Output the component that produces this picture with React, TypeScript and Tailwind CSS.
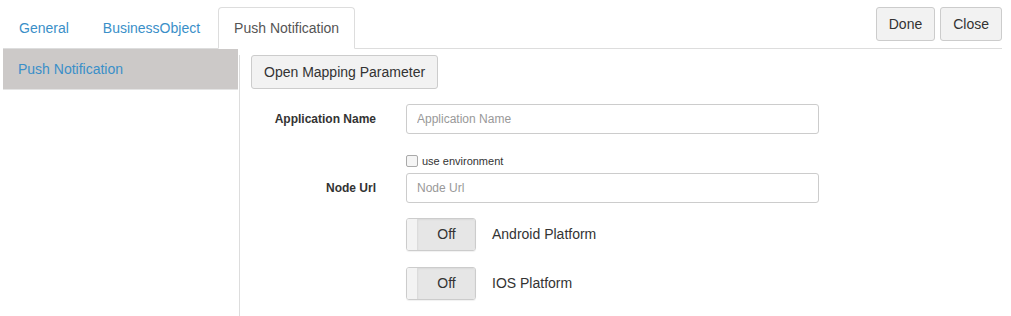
import type { FC } from 'react';

const Toggle: FC<{ label: string }> = ({ label }) => (
  <div className="flex items-center">
    <div className="flex h-[33px] w-[70px] overflow-hidden rounded-[3px] border border-[#ccc] shadow-[0_1px_1px_rgba(0,0,0,0.06)]">
      <div className="w-[11px] bg-[#f3f3f3] border-r border-[#dcdcdc]" />
      <div className="flex flex-1 items-center justify-center bg-[#e6e6e6] text-[14px] text-[#333] shadow-[inset_0_1px_2px_rgba(0,0,0,0.06)]">
        Off
      </div>
    </div>
    <span className="ml-[16px] text-[14px] text-[#333]">{label}</span>
  </div>
);

const FormRow: FC<{ label: string; placeholder: string }> = ({ label, placeholder }) => (
  <div className="flex items-center">
    <label className="w-[125px] text-right text-[12px] font-bold text-[#333]">{label}</label>
    <input
      placeholder={placeholder}
      className="ml-[30px] h-[30px] w-[413px] rounded-[3px] border border-[#ccc] px-[10px] text-[12px] text-[#555] placeholder:text-[#999] outline-none"
    />
  </div>
);

export default function App() {
  const tabs = ['General', 'BusinessObject', 'Push Notification'];
  return (
    <div className="h-[316px] w-[1011px] overflow-hidden bg-white font-['Liberation_Sans',Arial,sans-serif]">
      <div className="ml-[3px] w-[999px]">
        {/* tab bar */}
        <div className="flex h-[49px] items-end border-b border-[#ddd]">
          <ul className="flex">
            {tabs.map((t, i) => {
              const active = i === tabs.length - 1;
              return (
                <li key={t} className="mr-[2px] -mb-px">
                  <span
                    className={
                      active
                        ? 'block rounded-t-[4px] border border-[#ddd] border-b-white bg-white px-[15px] py-[10px] text-[14px] leading-[20px] text-[#555]'
                        : 'block border border-transparent px-[15px] py-[10px] text-[14px] leading-[20px] text-[#3a8fc8]'
                    }
                  >
                    {t}
                  </span>
                </li>
              );
            })}
          </ul>
          <div className="ml-auto mb-[7px] flex gap-[5px]">
            <button className="h-[34px] rounded-[3px] border border-[#ccc] bg-[#f2f2f2] px-[12px] text-[14px] text-[#333]">Done</button>
            <button className="h-[34px] rounded-[3px] border border-[#ccc] bg-[#f2f2f2] px-[12px] text-[14px] text-[#333]">Close</button>
          </div>
        </div>

        <div className="flex">
          {/* sidebar */}
          <div className="w-[235px] shrink-0">
            <div className="h-[41px] border-b border-[#e4e4e4] bg-[#ccc9c8] pl-[15px] pt-[10px] text-[14px] text-[#3a8fc8]">
              Push Notification
            </div>
          </div>

          {/* content */}
          <div className="mt-[6px] ml-px h-[300px] flex-1 border-l border-[#ddd] pl-[11px]">
            <button className="h-[34px] rounded-[3px] border border-[#ccc] bg-[#f2f2f2] px-[12px] text-[14px] text-[#333]">
              Open Mapping Parameter
            </button>

            <div className="mt-[15px]">
              <FormRow label="Application Name" placeholder="Application Name" />
            </div>

            <div className="mt-[19px] ml-[155px] flex items-center">
              <span className="h-[12px] w-[12px] rounded-[2px] border border-[#aaa] bg-[#f5f5f5]" />
              <span className="ml-[4px] text-[11px] text-[#333]">use environment</span>
            </div>

            <div className="mt-[3px]">
              <FormRow label="Node Url" placeholder="Node Url" />
            </div>

            <div className="mt-[15px] ml-[155px] flex flex-col gap-[16px]">
              <Toggle label="Android Platform" />
              <Toggle label="IOS Platform" />
            </div>
          </div>
        </div>
      </div>
    </div>
  );
}
